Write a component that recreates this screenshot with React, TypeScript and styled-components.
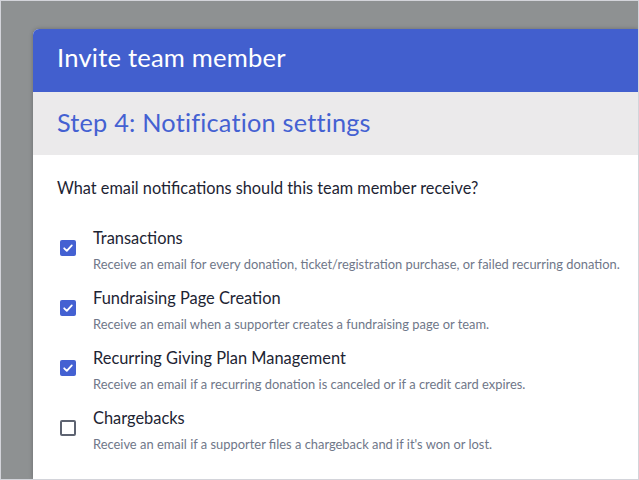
import styled, { createGlobalStyle } from 'styled-components';

const GlobalStyle = createGlobalStyle`
    html, body {
        margin: 0;
        padding: 0;
    }
    body {
        font-family: Lato, "Liberation Sans", sans-serif;
    }
`

const Frame = styled.div`
    box-sizing: border-box;
    width: 639px;
    height: 480px;
    border: 1px solid #d3d4da;
    background-color: #8e9192;
    padding: 28px 0 0 32px;
    display: flex;
    overflow: hidden;
`

const Card = styled.div`
    flex: 1;
    display: flex;
    flex-direction: column;
    background-color: #fff;
    border-top-left-radius: 6px;
    overflow: hidden;
    box-shadow: rgba(0, 0, 0, 0.25) 0px 0px 4px 0px;
`

const Header = styled.div`
    box-sizing: border-box;
    height: 63px;
    display: flex;
    align-items: center;
    padding: 0 0 7px 24px;
    background-color: #425fce;
    color: #fff;
    font-size: 25.6px;
    letter-spacing: 0.2px;
`

const StepBar = styled.div`
    box-sizing: border-box;
    height: 63px;
    display: flex;
    align-items: center;
    padding: 0 0 4px 24px;
    background-color: #ebeaeb;
    color: #4461d2;
    font-size: 25.3px;
    letter-spacing: 0.2px;
`

const Body = styled.div`
    padding: 23px 0 0 24px;
    display: flex;
    flex-direction: column;
`

const Question = styled.div`
    font-size: 16.3px;
    line-height: 20px;
    color: #1d2433;
    margin-bottom: 30px;
`

const OptionList = styled.div`
    display: flex;
    flex-direction: column;
    gap: 16px;
`

const Option = styled.label`
    display: flex;
    align-items: flex-start;
    gap: 17px;
`

const Box = styled.span<{ $checked: boolean }>`
    box-sizing: border-box;
    flex: none;
    width: 16px;
    height: 16px;
    margin-inline-start: 3px;
    margin-top: 12px;
    border-radius: 2px;
    display: flex;
    align-items: center;
    justify-content: center;
    background-color: ${p => (p.$checked ? '#4461d2' : '#fff')};
    border: ${p => (p.$checked ? 'none' : '2px solid #5d6371')};
`

const OptionText = styled.div`
    display: flex;
    flex-direction: column;
    gap: 8px;
    white-space: nowrap;
`

const OptionTitle = styled.div`
    font-size: 16.4px;
    line-height: 20px;
    color: #1d2433;
`

const OptionDesc = styled.div`
    font-size: 12.9px;
    line-height: 16px;
    color: #6f7789;
`

const options = [
    {
        title: 'Transactions',
        desc: 'Receive an email for every donation, ticket/registration purchase, or failed recurring donation.',
        checked: true,
    },
    {
        title: 'Fundraising Page Creation',
        desc: 'Receive an email when a supporter creates a fundraising page or team.',
        checked: true,
    },
    {
        title: 'Recurring Giving Plan Management',
        desc: 'Receive an email if a recurring donation is canceled or if a credit card expires.',
        checked: true,
    },
    {
        title: 'Chargebacks',
        desc: "Receive an email if a supporter files a chargeback and if it's won or lost.",
        checked: false,
    },
]

function Check() {
    return (
        <svg width="12" height="12" viewBox="0 0 12 12" fill="none">
            <path d="M2.2 6.3 L4.8 8.8 L9.8 3.4" stroke="#fff" strokeWidth="1.8" strokeLinecap="round" strokeLinejoin="round" />
        </svg>
    )
}

export default function App() {
    return (
        <>
            <GlobalStyle />
            <Frame>
                <Card>
                    <Header>Invite team member</Header>
                    <StepBar>Step 4: Notification settings</StepBar>
                    <Body>
                        <Question>What email notifications should this team member receive?</Question>
                        <OptionList>
                            {options.map(o => (
                                <Option key={o.title}>
                                    <Box $checked={o.checked}>{o.checked && <Check />}</Box>
                                    <OptionText>
                                        <OptionTitle>{o.title}</OptionTitle>
                                        <OptionDesc>{o.desc}</OptionDesc>
                                    </OptionText>
                                </Option>
                            ))}
                        </OptionList>
                    </Body>
                </Card>
            </Frame>
        </>
    );
}
